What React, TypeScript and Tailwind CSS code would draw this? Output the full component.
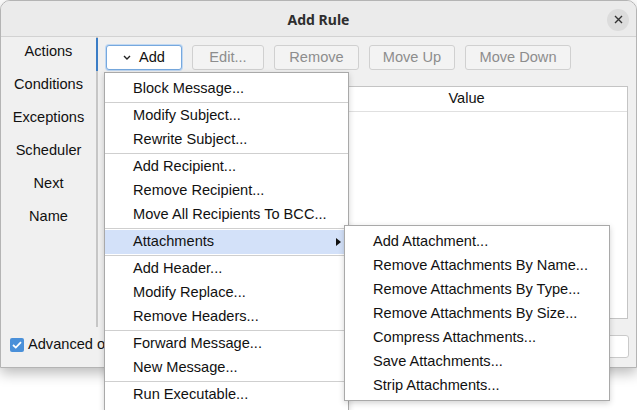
import React from 'react';

const tabs = ['Actions', 'Conditions', 'Exceptions', 'Scheduler', 'Next', 'Name'];

const toolButtons = [
  { label: 'Edit...', w: 'w-[72px]' },
  { label: 'Remove', w: 'w-[85px]' },
  { label: 'Move Up', w: 'w-[86px]' },
  { label: 'Move Down', w: 'w-[106px]' },
];

// null = separator
const addMenu: (string | null)[] = [
  'Block Message...',
  null,
  'Modify Subject...',
  'Rewrite Subject...',
  null,
  'Add Recipient...',
  'Remove Recipient...',
  'Move All Recipients To BCC...',
  null,
  'Attachments',
  null,
  'Add Header...',
  'Modify Replace...',
  'Remove Headers...',
  null,
  'Forward Message...',
  'New Message...',
  null,
  'Run Executable...',
];

const attachmentMenu = [
  'Add Attachment...',
  'Remove Attachments By Name...',
  'Remove Attachments By Type...',
  'Remove Attachments By Size...',
  'Compress Attachments...',
  'Save Attachments...',
  'Strip Attachments...',
];

const App: React.FC = () => {
  return (
    <div className="relative w-[637px] h-[410px] overflow-hidden bg-white font-['Liberation_Sans',Arial,sans-serif] text-[14.6px] text-[#111]">
      {/* Dialog window */}
      <div className="flex flex-col h-[368px] rounded-t-[10px] border border-[#b4b4b4] bg-[#f0f0f0] shadow-[0_5px_14px_rgba(0,0,0,0.28)] overflow-hidden">
        {/* Title bar */}
        <div className="grid grid-cols-[1fr_auto_1fr] items-center h-[36px] pt-[2px] bg-[#ebebeb] border-b border-[#d2d2d2]">
          <div />
          <div className="font-['Noto_Sans',sans-serif] font-bold text-[14px] text-[#2e2e2e]">Add Rule</div>
          <div className="flex justify-end pr-[7px]">
            <button className="flex items-center justify-center w-[22px] h-[22px] rounded-full bg-[#dcdcdc]">
              <svg width="9" height="9" viewBox="0 0 9 9">
                <path d="M1 1L8 8M8 1L1 8" stroke="#333" strokeWidth="1.4" />
              </svg>
            </button>
          </div>
        </div>

        {/* Body */}
        <div className="flex h-[290px]">
          {/* Tab list */}
          <div className="flex flex-col w-[97px] pt-px border-r-2 border-[#c6c6c6]">
            {tabs.map((t, i) => (
              <div
                key={t}
                className={`h-[33px] pt-[4px] leading-[18px] text-center -mr-[2px] border-r-2 ${
                  i === 0 ? 'border-[#3b7dc6]' : 'border-transparent'
                }`}
              >
                {t}
              </div>
            ))}
          </div>

          {/* Main panel */}
          <div className="flex-1 flex flex-col pl-[8px] pr-[8px] pt-[8px] pb-[8px]">
            <div className="flex gap-[10px] h-[25px]">
              <button className="flex items-center justify-center gap-[8px] w-[76px] rounded-[3px] bg-white border border-[#76a8de] shadow-[0_0_0_1px_#c0d8f2]">
                <svg width="8" height="5" viewBox="0 0 8 5">
                  <path d="M1 1L4 4L7 1" fill="none" stroke="#222" strokeWidth="1.4" />
                </svg>
                <span>Add</span>
              </button>
              {toolButtons.map((b) => (
                <button
                  key={b.label}
                  className={`${b.w} rounded-[3px] bg-[#f3f3f3] border border-[#d0d0d0] text-[#8d8d8d]`}
                >
                  {b.label}
                </button>
              ))}
            </div>

            <div className="flex-1 mt-[16px] bg-white border border-[#c4c4c4] flex flex-col">
              <div className="flex h-[25px] border-b border-[#e0e0e0]">
                <div className="w-[199px] border-r border-[#e0e0e0]" />
                <div className="flex-1 flex items-center justify-center">Value</div>
              </div>
            </div>
          </div>
        </div>

        {/* Bottom row */}
        <div className="flex-1 flex items-center pb-[4px] pl-[9px] pr-[7px]">
          <span className="flex items-center justify-center w-[14px] h-[14px] rounded-[2px] bg-[#4a90d9]">
            <svg width="10" height="8" viewBox="0 0 10 8">
              <path d="M1 4L3.8 6.6L9 1.2" fill="none" stroke="white" strokeWidth="1.8" />
            </svg>
          </span>
          <span className="ml-[4px]">Advanced options</span>
          <div className="ml-auto w-[90px] h-[23px] mt-[2px] bg-white border border-[#cacaca] rounded-[3px]" />
        </div>
      </div>

      {/* Add dropdown menu */}
      <div className="absolute left-[104px] top-[72px] w-[245px] pt-[4px] pb-[3px] bg-white border border-[#a9a9a9] shadow-[0_2px_6px_rgba(0,0,0,0.18)]">
        {addMenu.map((item, i) =>
          item === null ? (
            <div key={i} className="h-px my-px bg-[#cfcfcf]" />
          ) : (
            <div
              key={i}
              className={`flex items-center justify-between h-[24px] pl-[28px] pr-[7px] ${
                item === 'Attachments' ? 'bg-[#d3e1f9]' : ''
              }`}
            >
              <span>{item}</span>
              {item === 'Attachments' && (
                <svg width="5" height="8" viewBox="0 0 5 8">
                  <path d="M0 0L5 4L0 8Z" fill="#111" />
                </svg>
              )}
            </div>
          )
        )}
      </div>

      {/* Attachments submenu */}
      <div className="absolute left-[344px] top-[225px] w-[266px] pt-[4px] pb-[2px] bg-white border border-[#a9a9a9] shadow-[0_2px_6px_rgba(0,0,0,0.18)]">
        {attachmentMenu.map((item) => (
          <div key={item} className="flex items-center h-[24px] pl-[28px]">
            {item}
          </div>
        ))}
      </div>
    </div>
  );
};

export default App;
